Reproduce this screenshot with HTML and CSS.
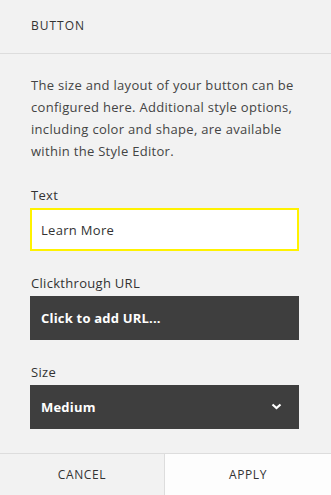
FILE: index.html
```html
<!DOCTYPE html>
<html lang="en">
<head>
    <meta charset="UTF-8">
    <meta name="viewport" content="width=device-width, initial-scale=1.0">
    <title>Button</title>
    <link rel="stylesheet" href="styles.css">
</head>
<body>
    <div class="panel">
        <div class="panel-header">BUTTON</div>

        <div class="panel-body">
            <p class="intro">The size and layout of your button can be configured here. Additional style options, including color and shape, are available within the Style Editor.</p>

            <div class="field">
                <label class="field-label" for="btnText">Text</label>
                <input type="text" id="btnText" class="text-input" value="Learn More">
            </div>

            <div class="field">
                <div class="field-label">Clickthrough URL</div>
                <div class="dark-box">Click to add URL...</div>
            </div>

            <div class="field">
                <div class="field-label">Size</div>
                <div class="dark-box select">
                    <span>Medium</span>
                    <svg class="chevron" width="11" height="7" viewBox="0 0 11 7">
                        <polyline points="1.5,1.5 5.5,5 9.5,1.5" fill="none" stroke="#fff" stroke-width="2.2"/>
                    </svg>
                </div>
            </div>
        </div>

        <div class="panel-footer">
            <button class="footer-btn cancel">CANCEL</button>
            <button class="footer-btn apply">APPLY</button>
        </div>
    </div>
</body>
</html>
```

FILE: styles.css
```css
* {
    box-sizing: border-box;
}

body {
    margin: 0;
    font-family: "Open Sans", Arial, sans-serif;
    background-color: #f2f2f2;
    color: #3a3a3a;
}

.panel {
    width: 331px;
    height: 495px;
    display: flex;
    flex-direction: column;
}

.panel-header {
    height: 54px;
    padding: 17px 31px 0;
    font-size: 12px;
    letter-spacing: 1px;
    color: #333;
    border-bottom: 1px solid #dddddd;
}

.panel-body {
    flex: 1;
    padding: 20px 32px 0 30px;
}

.intro {
    margin: 0 0 22px 1px;
    font-size: 13px;
    line-height: 22px;
    letter-spacing: 0.3px;
    color: #444;
}

.field {
    margin-bottom: 21px;
}

.field-label {
    display: block;
    font-size: 13px;
    line-height: 22px;
    letter-spacing: 0.3px;
    margin-left: 1px;
    margin-bottom: 2px;
    color: #333;
}

.text-input {
    display: block;
    width: 100%;
    height: 43px;
    margin: 0;
    padding: 0 9px;
    border: 2px solid #fff200;
    background: #fff;
    font-family: inherit;
    font-size: 13px;
    letter-spacing: 0.3px;
    color: #333;
    outline: none;
}

.dark-box {
    height: 44px;
    display: flex;
    align-items: center;
    padding: 0 17px 0 11px;
    background-color: #3e3e3e;
    color: #fff;
    font-size: 13px;
    font-weight: 700;
    letter-spacing: 0.2px;
}

.select {
    justify-content: space-between;
}

.chevron {
    margin-top: -2px;
}

.panel-footer {
    display: flex;
    height: 42px;
    border-top: 1px solid #dddddd;
}

.footer-btn {
    flex: 1;
    margin: 0;
    border: none;
    font-family: inherit;
    font-size: 12px;
    letter-spacing: 0.6px;
    color: #333;
    cursor: pointer;
}

.cancel {
    background-color: #f2f2f2;
    flex: 0 0 164px;
}

.apply {
    background-color: #fdfdfd;
    border-left: 1px solid #dddddd;
}
```
